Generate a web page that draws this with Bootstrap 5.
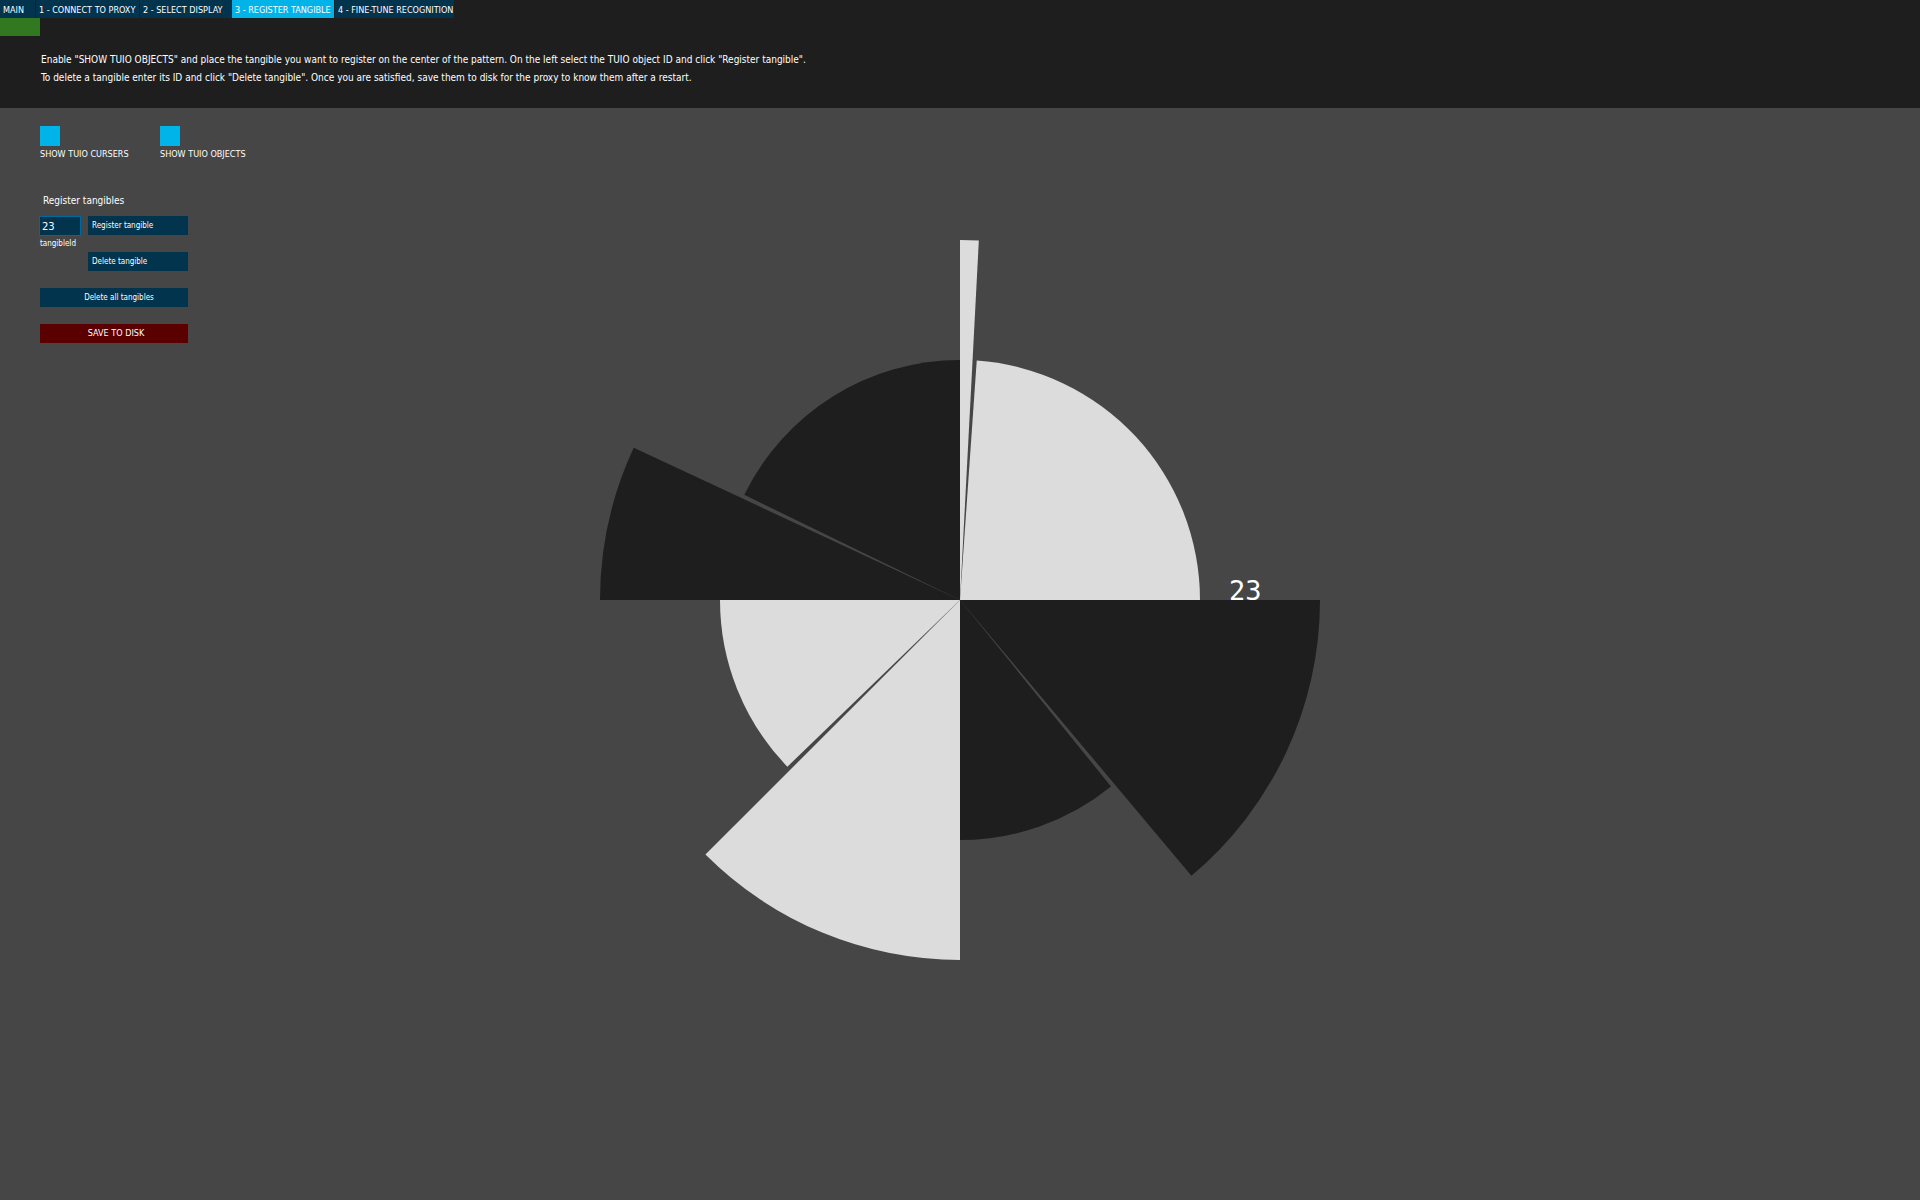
<!DOCTYPE html>
<html lang="en">
<head>
<meta charset="utf-8">
<meta name="viewport" content="width=device-width, initial-scale=1">
<title>Register tangible</title>
<link href="https://cdn.jsdelivr.net/npm/bootstrap@5.3.0/dist/css/bootstrap.min.css" rel="stylesheet">
<style>
  :root { --navy: #02344d; --cyan: #00b4ea; }
  body {
    background: #464646; color: #fff;
    font: 9px/18px "DejaVu Sans Condensed", "DejaVu Sans", sans-serif;
  }
  .top-panel { background: #1e1e1e; min-height: 108px; }
  .tab-strip { gap: 1px; }
  .tab-strip .nav-link {
    background: var(--navy); color: #fff; border-radius: 0;
    height: 18px; padding: 1px 3px 0; font-size: 9px; line-height: 18px; white-space: nowrap;
  }
  .tab-strip .nav-link.active { background: var(--cyan); }
  .w-main { width: 35px; } .w-proxy { width: 103px; } .w-display { width: 91px; }
  .w-register { width: 102px; } .w-tune { width: 119px; }
  .status-light { width: 40px; height: 18px; background: #327820; }
  .intro { padding: 15px 41px 0; font-size: 10px; line-height: 18px; }
  .controls { position: relative; z-index: 1; padding: 18px 40px; }
  .toggle-cell { width: 120px; }
  .toggle-cell .form-check-input {
    display: block; float: none; width: 20px; height: 20px; margin: 0;
    border: 0; border-radius: 0; background: var(--navy);
  }
  .toggle-cell .form-check-input:checked { background: var(--cyan); }
  .toggle-cell label, .id-label { display: block; line-height: 16px; }
  .register-form { width: 148px; padding-top: 30px; }
  .register-form h2 { font-size: 10px; font-weight: 400; line-height: 18px; margin: 0 0 6px 3px; }
  .id-field { width: 42px; margin-left: -1px; }
  .id-field .form-control {
    height: 20px; min-height: 0; padding: 0 2px; border: 1px solid #00699c; border-radius: 0;
    background: var(--navy); color: #fff; font: 10px/18px "DejaVu Sans", sans-serif;
  }
  .id-label { padding: 0 1px; font-size: 8px; white-space: nowrap; }
  .action {
    height: 19px; padding: 0 4px; border: 0; border-radius: 0;
    background: var(--navy); color: #fff; font-size: 8px; line-height: 19px;
  }
  .action:hover { background: var(--cyan); color: #fff; }
  .action.wide { padding-left: 14px; }
  .action.save { background: #5a0000; font-size: 9px; padding-left: 8px; }
  .stack { gap: 17px; }
  .actions { width: 100px; }
  .pattern { width: 720px; height: 720px; overflow: visible; }
  .pattern text { font: 27px "DejaVu Sans Mono", monospace; fill: #fff; }
  .pale { fill: #dcdcdc; } .deep { fill: #1e1e1e; }
</style>
<script src="https://cdn.jsdelivr.net/npm/bootstrap@5.3.0/dist/js/bootstrap.bundle.min.js"></script>
</head>
<body>
<div class="position-relative min-vh-100">
  <header class="top-panel">
    <nav class="nav tab-strip" aria-label="Steps">
      <a class="nav-link w-main" href="#">MAIN</a>
      <a class="nav-link w-proxy" href="#">1 - CONNECT TO PROXY</a>
      <a class="nav-link w-display" href="#">2 - SELECT DISPLAY</a>
      <a class="nav-link w-register active" href="#" aria-current="page">3 - REGISTER TANGIBLE</a>
      <a class="nav-link w-tune" href="#">4 - FINE-TUNE RECOGNITION</a>
    </nav>
    <div class="status-light"></div>
    <div class="intro">
      <p class="mb-0">Enable "SHOW TUIO OBJECTS" and place the tangible you want to register on the center of the pattern. On the left select the TUIO object ID and click "Register tangible".</p>
      <p class="mb-0">To delete a tangible enter its ID and click "Delete tangible". Once you are satisfied, save them to disk for the proxy to know them after a restart.</p>
    </div>
  </header>

  <main>
    <div class="controls">
      <div class="d-flex">
        <div class="toggle-cell">
          <input class="form-check-input" type="checkbox" id="showCursers" checked>
          <label for="showCursers">SHOW TUIO CURSERS</label>
        </div>
        <div class="toggle-cell">
          <input class="form-check-input" type="checkbox" id="showObjects" checked>
          <label for="showObjects">SHOW TUIO OBJECTS</label>
        </div>
      </div>

      <form class="register-form d-flex flex-column stack">
        <section>
          <h2>Register tangibles</h2>
          <div class="d-flex justify-content-between">
            <div class="id-field">
              <input class="form-control" type="text" id="tangibleId" value="23">
              <label class="id-label" for="tangibleId">tangibleId</label>
            </div>
            <div class="actions d-flex flex-column stack">
              <button class="btn action text-start" type="button">Register tangible</button>
              <button class="btn action text-start" type="button">Delete tangible</button>
            </div>
          </div>
        </section>
        <button class="btn action wide" type="button">Delete all tangibles</button>
        <button class="btn action save" type="button">SAVE TO DISK</button>
      </form>
    </div>

    <svg class="pattern position-absolute top-50 start-50 translate-middle" viewBox="-360 -360 720 720" role="img" aria-label="Tangible placement pattern">
      <text x="269" y="0">23</text>
      <path class="pale" d="M0 0V-360A360 360 0 0 1 18.84 -359.51Z"/>
      <path class="pale" d="M0 0L16.74 -239.42A240 240 0 0 1 240 0Z"/>
      <path class="deep" d="M0 0H360A360 360 0 0 1 231.4 275.78Z"/>
      <path class="deep" d="M0 0L151.04 186.52A240 240 0 0 1 0 240Z"/>
      <path class="pale" d="M0 0V360A360 360 0 0 1 -254.56 254.56Z"/>
      <path class="pale" d="M0 0L-172.64 166.72A240 240 0 0 1 -240 0Z"/>
      <path class="deep" d="M0 0H-360A360 360 0 0 1 -326.27 -152.14Z"/>
      <path class="deep" d="M0 0L-215.71 -105.21A240 240 0 0 1 0 -240Z"/>
    </svg>
  </main>
</div>
</body>
</html>
